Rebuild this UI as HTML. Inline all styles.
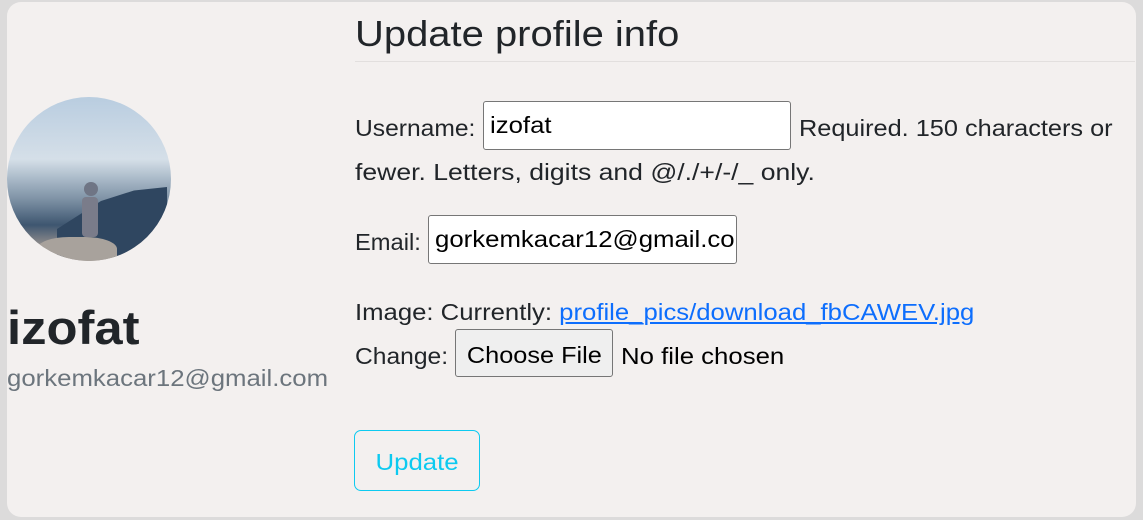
<!DOCTYPE html>
<html><head><style>
body{margin:0;width:1143px;height:520px;background:#dcdbdb;font-family:"Liberation Sans",sans-serif;color:#212529;position:relative;overflow:hidden}
.card{position:absolute;left:7px;top:2px;width:1129px;height:515px;background:#f3f0ef;border-radius:14px}
.a{position:absolute;white-space:nowrap;transform-origin:0 50%}
.s{transform:scaleX(1.12)}
.t{font-size:23px}
.box{position:absolute;background:#fff;border:1px solid #767676;border-radius:3px;box-sizing:border-box;font-size:23px;padding:0 6px;line-height:47px;overflow:hidden;white-space:nowrap;color:#000}
.box span{display:inline-block;transform:scaleX(1.12);transform-origin:0 50%}
</style></head><body>
<div class="card"></div>
<div class="a" style="left:7px;top:97px;width:164px;height:164px;border-radius:50%;overflow:hidden;background:linear-gradient(180deg,#b9cde0 0%,#d5dfe8 38%,#a9b9c8 50%,#7f93a6 62%,#3e5670 78%,#9c9590 92%)">
<div style="position:absolute;left:50px;top:90px;width:110px;height:70px;background:#2f4660;clip-path:polygon(0 60%,40% 20%,70% 5%,100% 0,100% 100%,0 100%)"></div>
<div style="position:absolute;left:30px;top:140px;width:80px;height:30px;background:#a8a29c;border-radius:40% 40% 0 0"></div>
<div style="position:absolute;left:75px;top:100px;width:16px;height:40px;background:#7a7c8a;border-radius:4px"></div>
<div style="position:absolute;left:77px;top:85px;width:14px;height:14px;background:#6f7585;border-radius:50%"></div>
</div>
<div class="a" style="left:7px;top:298px;font-size:47px;font-weight:bold;line-height:60px;transform:scaleX(1.08)">izofat</div>
<div class="a s" style="left:7px;top:363px;font-size:23px;color:#6c757d;line-height:30px">gorkemkacar12@gmail.com</div>
<div class="a" style="left:355px;top:12px;font-size:36px;line-height:44px;transform:scaleX(1.11)">Update profile info</div>
<div class="a" style="left:355px;top:61px;width:780px;height:1px;background:#e2dfde"></div>
<div class="a t" style="left:355px;top:113px;line-height:30px;transform:scaleX(1.07)">Username:</div>
<div class="box" style="left:483px;top:101px;width:308px;height:49px"><span>izofat</span></div>
<div class="a t" style="left:799px;top:113px;line-height:30px;transform:scaleX(1.10)">Required. 150 characters or</div>
<div class="a t" style="left:355px;top:157px;line-height:30px;transform:scaleX(1.155)">fewer. Letters, digits and @/./+/-/_ only.</div>
<div class="a t" style="left:355px;top:227px;line-height:30px;transform:scaleX(1.03)">Email:</div>
<div class="box" style="left:428px;top:215px;width:309px;height:49px"><span>gorkemkacar12@gmail.com</span></div>
<div class="a t" style="left:355px;top:297px;line-height:30px;transform:scaleX(1.117)">Image: Currently: <span style="color:#0d6efd;text-decoration:underline">profile_pics/download_fbCAWEV.jpg</span></div>
<div class="a t" style="left:355px;top:341px;line-height:30px;transform:scaleX(1.07)">Change:</div>
<div class="a t" style="left:455px;top:329px;width:158px;height:48px;box-sizing:border-box;border:1px solid #767676;border-radius:3px;background:#efefef;text-align:center;line-height:50px;color:#000"><span style="display:inline-block;transform:scaleX(1.1)">Choose File</span></div>
<div class="a t s" style="left:621px;top:341px;line-height:30px;color:#000">No file chosen</div>
<div class="a t" style="left:354px;top:430px;width:126px;height:61px;box-sizing:border-box;border:1px solid #0dcaf0;border-radius:7px;color:#0dcaf0;text-align:center;line-height:63px"><span style="display:inline-block;transform:scaleX(1.12)">Update</span></div>
</body></html>
